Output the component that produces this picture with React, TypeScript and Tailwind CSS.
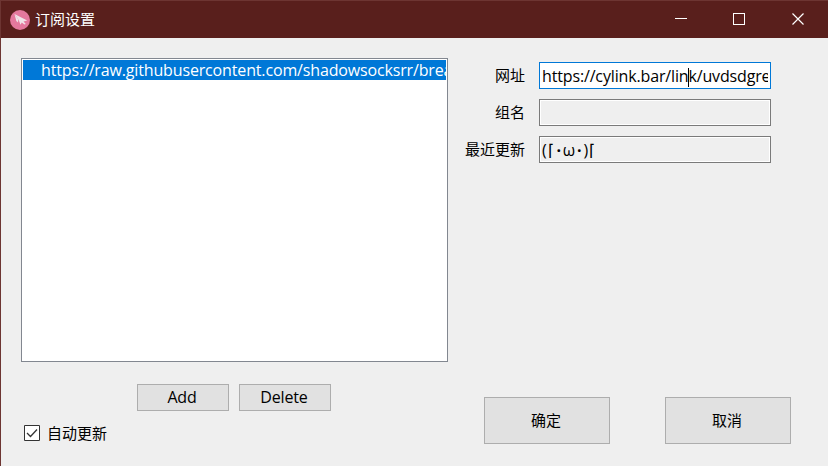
import type { ReactNode } from "react";

const cjk = "font-['Noto_Sans_CJK_SC',sans-serif] text-[15px]";
const latin = "font-['Open_Sans','Noto_Sans_CJK_SC',sans-serif] text-[16px] tracking-[-0.15px]";

function TitleBar() {
  return (
    <header className="flex h-[37px] shrink-0 items-center bg-[#591f1c] text-white">
      <svg className="ml-[9px] size-5" viewBox="0 0 20 20">
        <circle cx="10" cy="10" r="10" fill="#e4789d" />
        <path d="M4.500 4 17.200 10.500 13.500 11.500 15.800 14 14.300 14.500 11.800 12.500 10.500 14.800 8.500 9.500Z" fill="#f0e4e8" />
        <path d="M4.500 4 8.300 9.300 8 12.500 6.300 11Z" fill="#f0e4e8" />
      </svg>
      <span className={`${cjk} ml-[5px] mb-[2px] leading-5`}>订阅设置</span>
      <div className="ml-auto flex h-full items-center">
        <svg className="h-[37px] w-[175px]" viewBox="0 0 175 37" fill="none" stroke="white" shapeRendering="crispEdges">
          <path d="M22 17.5h12M80.500 12.500h11v11h-11z" />
          <path d="m139.500 12.500 11 11m0-11-11 11" shapeRendering="geometricPrecision" strokeWidth="1.200" />
        </svg>
      </div>
    </header>
  );
}

function Field({ label, focused = false, children }: { label: string; focused?: boolean; children?: ReactNode }) {
  return (
    <div className="flex h-[27px] items-center">
      <label className={`${cjk} w-[70px] text-right leading-[25px] pb-[2px]`}>{label}</label>
      <div
        className={`ml-[14px] h-[27px] w-[232px] border p-px ${
          focused ? "border-[#0078d7] bg-white" : "border-[#7a7a7a] bg-white"
        }`}
      >
        <div className={`${latin} h-full overflow-hidden whitespace-pre pl-px leading-[24px] ${focused ? "mr-px" : "bg-[#efefef]"}`}>
          {children}
        </div>
      </div>
    </div>
  );
}

function Button({ className, children }: { className: string; children: ReactNode }) {
  return (
    <button className={`flex items-center justify-center border border-[#adadad] bg-[#e1e1e1] pr-[2px] ${className}`}>
      {children}
    </button>
  );
}

export default function App() {
  return (
    <div className="flex h-[466px] w-[828px] flex-col overflow-hidden border-l border-t border-l-[#6d3532] border-t-[#6d3532] bg-[#efefef] text-black">
      <TitleBar />
      <main className="flex flex-1">
        <section className="ml-5 mt-5 w-[427px]">
          <div className="h-[304px] border border-[#828790] bg-white p-px">
            <div className={`${latin} h-5 overflow-hidden whitespace-nowrap bg-[#0078d7] pl-[18px] leading-[21px] text-white`}>
              https://raw.githubusercontent.com/shadowsocksrr/brea
            </div>
          </div>
          <div className="ml-[116px] mt-[22px] flex gap-[10px]">
            <Button className={`${latin} h-[27px] w-[92px] pb-px`}>Add</Button>
            <Button className={`${latin} h-[27px] w-[92px] pb-px`}>Delete</Button>
          </div>
          <label className="ml-[3px] mt-3 flex h-5 items-center">
            <svg className="size-4" viewBox="0 0 16 16" fill="none">
              <path d="M.5.5h15v15H.5z" fill="white" stroke="#333" />
              <path d="m3 8 3.500 3.500 6.500-7" stroke="#333" strokeWidth="1.300" />
            </svg>
            <span className={`${cjk} ml-[7px] leading-5`}>自动更新</span>
          </label>
        </section>
        <section className="ml-[7px] mt-6">
          <div className="flex flex-col gap-[10px]">
            <Field label="网址" focused>
              https://cylink.bar/lin<span className="-mr-px inline-block h-[20px] w-px bg-black align-middle" />k/uvdsdgre
            </Field>
            <Field label="组名" />
            <Field label="最近更新">
              (<span className="ml-px">⌈</span><span className="ml-[3px] mr-[2px] font-bold">·</span>ω<span className="ml-[2px] mr-[2px] font-bold">·</span>)<span className="ml-px">⌈</span>
            </Field>
          </div>
          <div className="ml-[29px] mt-[234px] flex gap-[55px]">
            <Button className={`${cjk} h-[47px] w-[126px]`}>确定</Button>
            <Button className={`${cjk} h-[47px] w-[126px]`}>取消</Button>
          </div>
        </section>
      </main>
    </div>
  );
}
